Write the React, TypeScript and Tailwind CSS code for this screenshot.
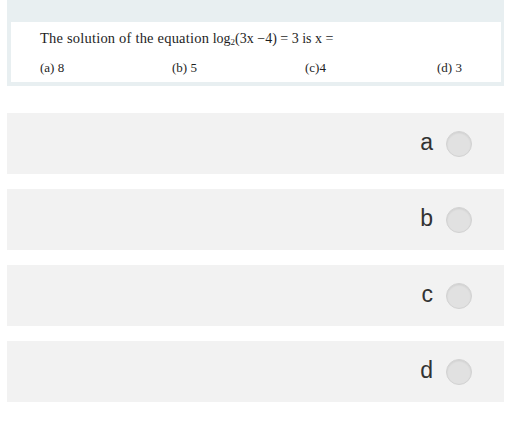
import React from "react";

const options = ["a", "b", "c", "d"];

export default function App() {
  return (
    <div className="w-[516px] h-[426px] bg-white">
      <div className="ml-[7px] w-[497px]">
        <div className="bg-[#e8eff1] pt-[22px] pl-[4px] pr-[3px] pb-[4px]">
          <div className="bg-white h-[60px] pl-[29px] pt-[7px] text-[#1e1e1e] [font-family:'Liberation_Serif',serif]">
            <div className="text-[14.5px] leading-[18px] h-[18px] whitespace-nowrap">
              <span className="tracking-[0.2px]">The solution of the equation</span>{" "}
              <span className="text-[14px]">
                log<sub className="text-[9px]">2</sub>(3x&nbsp;−4)&nbsp;=&nbsp;3 is x&nbsp;=
              </span>
            </div>
            <div className="flex mt-[14px] text-[13px] leading-[14px]">
              <span className="w-[132px]">(a) 8</span>
              <span className="w-[133px]">(b) 5</span>
              <span className="w-[132px]">(c)4</span>
              <span>(d) 3</span>
            </div>
          </div>
        </div>
        <div className="mt-[27px] flex flex-col gap-[15px]">
          {options.map((o) => (
            <div
              key={o}
              className="h-[61px] bg-[#f2f2f2] flex items-center justify-end pr-[32px] gap-[13px]"
            >
              <span className="text-[23px] leading-none text-[#333] [font-family:'Liberation_Sans',Arial,sans-serif] -mt-[2px]">
                {o}
              </span>
              <span className="w-[26px] h-[26px] rounded-full bg-[#e1e1e1] border border-[#d2d2d2] shadow-[inset_0_1px_2px_rgba(0,0,0,0.08)]" />
            </div>
          ))}
        </div>
      </div>
    </div>
  );
}
